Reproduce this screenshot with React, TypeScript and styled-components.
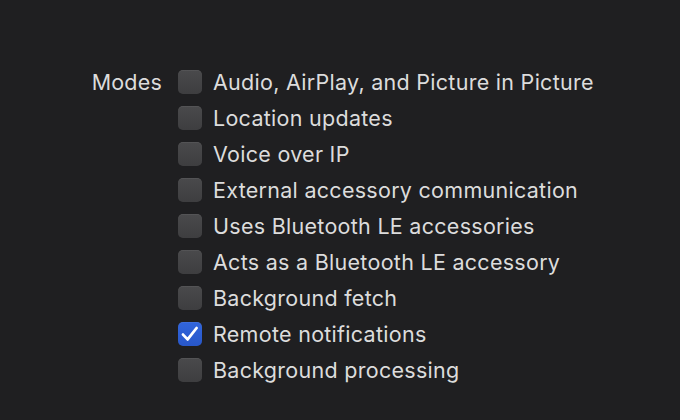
import React from "react";
import styled, { createGlobalStyle } from "styled-components";

const modes = [
  { label: "Audio, AirPlay, and Picture in Picture", on: false },
  { label: "Location updates", on: false },
  { label: "Voice over IP", on: false },
  { label: "External accessory communication", on: false },
  { label: "Uses Bluetooth LE accessories", on: false },
  { label: "Acts as a Bluetooth LE accessory", on: false },
  { label: "Background fetch", on: false },
  { label: "Remote notifications", on: true },
  { label: "Background processing", on: false },
];

const App: React.FC = () => {
  return (
    <>
      <Global />
      <Page>
        <Section>
          <Label>Modes</Label>
          <List>
            {modes.map((m) => (
              <Row key={m.label}>
                <Box on={m.on}>
                  {m.on && (
                    <svg width="24" height="24" viewBox="0 0 24 24">
                      <path
                        d="M5 12.6 L9.6 17.4 L18.6 6"
                        fill="none"
                        stroke="#fff"
                        strokeWidth="2.8"
                        strokeLinecap="round"
                        strokeLinejoin="round"
                      />
                    </svg>
                  )}
                </Box>
                <Text>{m.label}</Text>
              </Row>
            ))}
          </List>
        </Section>
      </Page>
    </>
  );
};

export default App;

const Global = createGlobalStyle`
  body {
    margin: 0;
    background: #1f1f21;
    font-family: Inter, "Liberation Sans", sans-serif;
  }
`;

const Page = styled.div`
  width: 680px;
  height: 420px;
  background: #1f1f21;
  padding-top: 64px;
  box-sizing: border-box;
`;

const Section = styled.div`
  display: flex;
  align-items: flex-start;
  padding-left: 80px;
`;

const Label = styled.div`
  width: 82px;
  text-align: right;
  font-size: 21.5px;
  line-height: 36px;
  color: #dcdcdc;
  margin-right: 16px;
  letter-spacing: 0.2px;
`;

const List = styled.div`
  display: flex;
  flex-direction: column;
`;

const Row = styled.div`
  display: flex;
  align-items: center;
  height: 36px;
`;

const Box = styled.div<{ on: boolean }>`
  width: 24px;
  height: 24px;
  box-sizing: border-box;
  border-radius: 5px;
  margin-right: 11px;
  display: flex;
  align-items: center;
  justify-content: center;
  background: ${({ on }) =>
    on
      ? "linear-gradient(#3165dc, #2857c9)"
      : "linear-gradient(#4a4a4c, #3e3e40)"};
  box-shadow: inset 0 0.5px 0 rgba(255, 255, 255, 0.12);
`;

const Text = styled.div`
  font-size: 21.5px;
  color: #dcdcdc;
  letter-spacing: 0.28px;
  margin-top: -1px;
`;
